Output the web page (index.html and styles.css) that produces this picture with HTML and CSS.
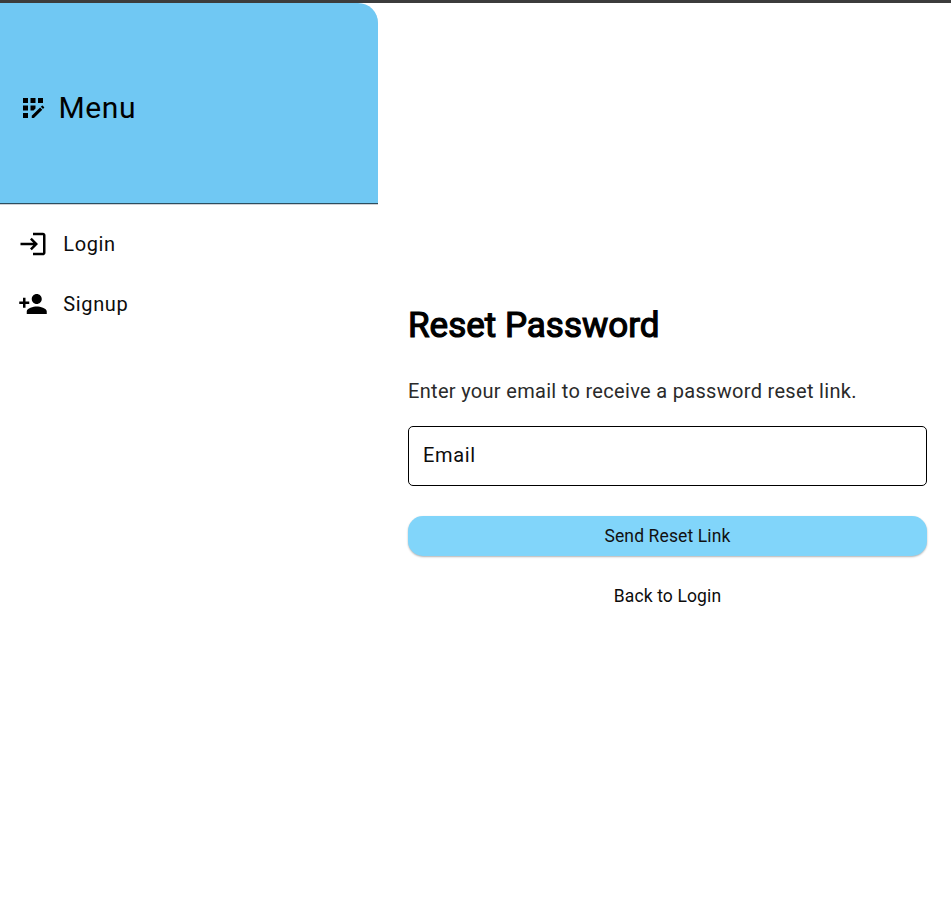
FILE: index.html
```html
<!DOCTYPE html>
<html lang="en">
<head>
<meta charset="utf-8">
<title>Reset Password</title>
<link rel="stylesheet" href="styles.css">
</head>
<body>
<div class="app">
  <aside class="sidebar">
    <header class="drawer-header">
      <svg class="icon" viewBox="0 0 24 24" aria-hidden="true"><path d="M10 4h4v4h-4zM4 16h4v4H4zM4 10h4v4H4zM4 4h4v4H4zM14 12.42V10h-4v4h2.42zM20.88 11.29l-1.17-1.17c-.16-.16-.42-.16-.58 0l-.88.88L20 12.75l.88-.88c.16-.16.16-.42 0-.58zM11 18.25V20h1.75l6.67-6.67-1.75-1.75zM16 4h4v4h-4z"/></svg>
      <span class="drawer-title">Menu</span>
    </header>
    <nav class="nav">
      <a class="nav-item">
        <svg class="icon" viewBox="0 0 24 24" aria-hidden="true"><path d="M11 7L9.6 8.4l2.6 2.6H2v2h10.2l-2.6 2.6L11 17l5-5-5-5zm9 12h-8v2h8c1.1 0 2-.9 2-2V5c0-1.1-.9-2-2-2h-8v2h8v14z"/></svg>
        <span>Login</span>
      </a>
      <a class="nav-item">
        <svg class="icon" viewBox="0 0 24 24" aria-hidden="true"><path d="M15 12c2.21 0 4-1.79 4-4s-1.79-4-4-4-4 1.79-4 4 1.79 4 4 4zm-9-2V7H4v3H1v2h3v3h2v-3h3v-2H6zm9 4c-2.67 0-8 1.34-8 4v2h16v-2c0-2.66-5.33-4-8-4z"/></svg>
        <span>Signup</span>
      </a>
    </nav>
  </aside>
  <main class="content">
    <h1 class="title">Reset Password</h1>
    <p class="hint">Enter your email to receive a password reset link.</p>
    <input class="field" type="email" placeholder="Email" aria-label="Email">
    <button class="submit">Send Reset Link</button>
    <a class="back">Back to Login</a>
  </main>
</div>
</body>
</html>
```
FILE: styles.css
```css
* { box-sizing: border-box; }
body {
  margin: 0;
  background: #fff;
  color: #000;
  font-family: Roboto, "Liberation Sans", sans-serif;
}
.app {
  display: flex;
  height: 907px;
  border-top: 3px solid #3c3c3c;
}
.sidebar { width: 378px; flex: none; }
.drawer-header {
  display: flex;
  align-items: center;
  gap: 10.5px;
  height: 201px;
  padding: 10px 18px 0;
  background: #70c8f3;
  border-top-right-radius: 20px;
  border-bottom: 1px solid #2c4d5e;
  box-shadow: 0 1px 0 #d0d0d4;
}
.icon { width: 30px; height: 30px; flex: none; fill: currentColor; }
.drawer-title { font-size: 30px; line-height: 40px; letter-spacing: 0.625px; }
.nav { padding-top: 10px; }
.nav-item {
  display: flex;
  align-items: center;
  gap: 15.3px;
  height: 60px;
  padding-left: 18px;
  font-size: 20px;
  letter-spacing: 0.625px;
  color: #0c0c0c;
}
.nav-item .icon { fill: #000; }
.content {
  flex: 1;
  display: flex;
  flex-direction: column;
  padding: 300px 24px 0 30px;
}
.title {
  margin: 0;
  font-size: 35px;
  font-weight: 400;
  line-height: 46px;
  -webkit-text-stroke: 1.2px #000;
}
.hint {
  margin: 27px 0 0;
  font-size: 20px;
  line-height: 30px;
  letter-spacing: 0.3125px;
  color: #2a2a2a;
}
.field {
  height: 60px;
  margin: 20px 0 0;
  padding: 0 14px 2px;
  border: 1.25px solid #000;
  border-radius: 5px;
  background: #fff;
  font: 20px Roboto, sans-serif;
  letter-spacing: 0.625px;
}
.field::placeholder { color: #0c0c0c; opacity: 1; }
.submit {
  height: 40px;
  margin: 30px 0 0;
  padding: 0;
  border: 0;
  border-radius: 15px;
  background: #81d5fa;
  box-shadow: 0 1px 2px rgba(0, 0, 0, 0.3);
  color: #111;
  font: 17.5px Roboto, sans-serif;
  letter-spacing: 0.125px;
}
.back {
  margin-top: 25px;
  text-align: center;
  font-size: 17.5px;
  line-height: 30px;
  letter-spacing: 0.125px;
  color: #0c0c0c;
}
```
